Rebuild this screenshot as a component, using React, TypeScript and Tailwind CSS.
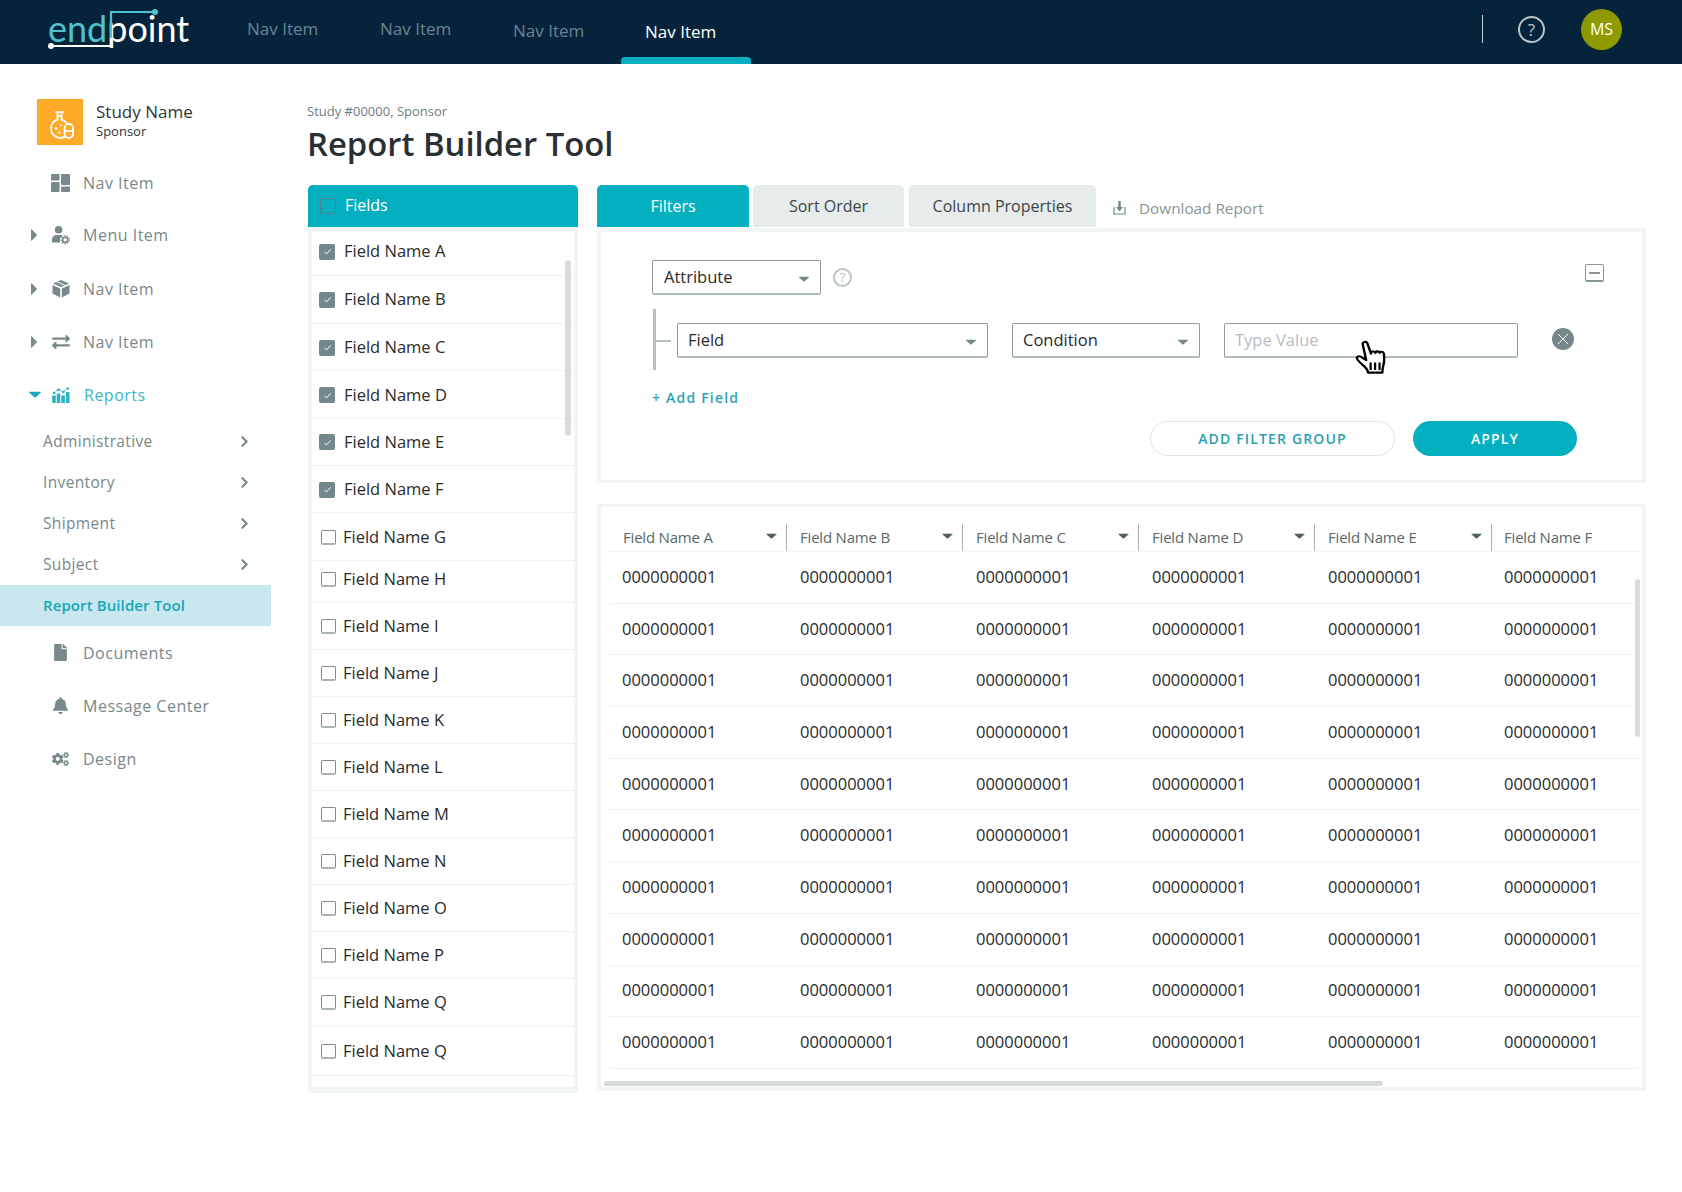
import React from 'react';
import { ChevronRight } from 'lucide-react';
import { FaExchangeAlt, FaFile, FaBell, FaCogs } from 'react-icons/fa';

const fieldRows = [
  { name: 'Field Name A', checked: true, row: 'h-[44px] pb-[4px]' },
  { name: 'Field Name B', checked: true, row: 'h-[48px]' },
  { name: 'Field Name C', checked: true, row: 'h-[47px] pt-[1px]' },
  { name: 'Field Name D', checked: true, row: 'h-[48px] pt-[1px]' },
  { name: 'Field Name E', checked: true, row: 'h-[47px]' },
  { name: 'Field Name F', checked: true, row: 'h-[47px] pt-[1px]' },
  { name: 'Field Name G', checked: false, row: 'h-[48px] pt-[1px]' },
  { name: 'Field Name H', checked: false, row: 'h-[42px] pb-[4px]' },
  { name: 'Field Name I', checked: false, row: 'h-[47px]' },
  { name: 'Field Name J', checked: false, row: 'h-[47px]' },
  { name: 'Field Name K', checked: false, row: 'h-[47px]' },
  { name: 'Field Name L', checked: false, row: 'h-[47px]' },
  { name: 'Field Name M', checked: false, row: 'h-[47px]' },
  { name: 'Field Name N', checked: false, row: 'h-[47px]' },
  { name: 'Field Name O', checked: false, row: 'h-[47px]' },
  { name: 'Field Name P', checked: false, row: 'h-[47px]' },
  { name: 'Field Name Q', checked: false, row: 'h-[48px]' },
  { name: 'Field Name Q', checked: false, row: 'h-[49px]' },
];

const columns = ['Field Name A', 'Field Name B', 'Field Name C', 'Field Name D', 'Field Name E', 'Field Name F'];
const rows = Array.from({ length: 10 }, (_, i) => i);

const Caret = ({ className }: { className: string }) => (
  <svg viewBox="0 0 12 7" className={className}>
    <path d="M0.6 0.8h10.8a.5.5 0 0 1 .35.85L6.4 6.4a.6.6 0 0 1-.8 0L.25 1.65A.5.5 0 0 1 .6.8z" fill="currentColor" />
  </svg>
);

const DashboardIcon = () => (
  <svg viewBox="0 0 19 18" className="w-[19px] h-[18px] text-[#78888b]" fill="currentColor">
    <rect x="0" y="0" width="8.5" height="6.5" rx="0.8" />
    <rect x="0" y="8" width="8.5" height="10" rx="0.8" />
    <rect x="10" y="0" width="9" height="11" rx="0.8" />
    <rect x="10" y="12.5" width="9" height="5.5" rx="0.8" />
  </svg>
);

const UserCogIcon = () => (
  <svg viewBox="0 0 20 20" className="w-[20px] h-[20px] text-[#78888b]" fill="currentColor">
    <circle cx="8" cy="4.5" r="4" />
    <path d="M1 18v-3.200C1 12 3.200 10 6 10h3.600c1 0 1.900.3 2.600.7A6 6 0 0 0 9.800 18z" />
    <circle cx="15" cy="15" r="2.700" fill="none" stroke="currentColor" strokeWidth="1.700" />
    <circle cx="15" cy="15" r="4.300" fill="none" stroke="currentColor" strokeWidth="1.400" strokeDasharray="1.500 1.500" />
  </svg>
);

const CubeIcon = () => (
  <svg viewBox="0 0 18 18" className="w-[18px] h-[18px] text-[#78888b]" fill="currentColor">
    <path d="M9 0L1 3.500 9 7l8-3.500z" />
    <path d="M.5 5v8.500L8.200 17.500V8.500z" />
    <path d="M17.500 5v8.500L9.800 17.500V8.500z" />
    <path d="M5 1.800l8 3.500" stroke="#fff" strokeWidth="1" fill="none" />
  </svg>
);

const ReportsIcon = () => (
  <svg viewBox="0 0 18 16" className="w-[18px] h-[16px] text-[#2fb4c4]" fill="currentColor">
    <rect x="0.2" y="8.500" width="3.600" height="7.500" />
    <rect x="4.700" y="6.500" width="3.600" height="9.500" />
    <rect x="9.300" y="8.500" width="3.600" height="7.500" />
    <rect x="13.900" y="5" width="3.600" height="11" />
    <path d="M2 6l4.600-3.400 4.600 2.400L15.800 1.500" fill="none" stroke="currentColor" strokeWidth="1.100" strokeDasharray="2 1" />
    <circle cx="2" cy="6" r="1.300" />
    <circle cx="6.600" cy="2.600" r="1.300" />
    <circle cx="11.200" cy="5" r="1.300" />
    <circle cx="15.800" cy="1.500" r="1.300" />
  </svg>
);

const FlaskIcon = () => (
  <svg viewBox="0 0 24 28" className="w-[24px] h-[28px]" fill="none" stroke="#fff" strokeWidth="1.8">
    <path d="M6 1.200h7M7.500 1.200v7.400M11.500 1.200v7.400" strokeLinecap="round" />
    <path d="M6.800 5h5.400" />
    <path d="M7.500 8.600C3.600 10 1 13.200 1 17.400 1 22.800 5 27 10 27c2 0 3.400-.4 4.800-1.200M11.500 8.600c2.400.8 4.400 2.400 5.600 4.400" strokeLinecap="round" />
    <rect x="14.600" y="12.800" width="8.400" height="14.200" rx="4.200" fill="#ffa928" />
    <path d="M14.800 20h8" />
    <circle cx="6.200" cy="17.600" r="1.500" fill="#fff" stroke="none" />
    <circle cx="10.800" cy="14.400" r="1.100" fill="#fff" stroke="none" />
    <circle cx="9.400" cy="21.600" r="1.200" fill="#fff" stroke="none" />
  </svg>
);

const HandCursor = () => (
  <svg viewBox="1 0 25 32" preserveAspectRatio="none" className="w-[31px] h-[35px]">
    <path
      d="M7.200 3.600c-.3-1.900 3-2.700 3.700-.7l3 9.600c-.2-2.200 3-2.700 3.600-.6.100-1.900 3-2 3.400-.1.300-1.400 3-1.500 3.300.5.500 3.600.4 8-.4 11.300-.4 1.800-.7 4-.7 6.200H11.600c-.3-2.600-1.500-4-3.400-6-1.700-1.800-4.300-4.200-5.400-6.300-1-1.900 1.300-3.400 2.900-2.200l4.300 3.100C9.500 14.500 7.800 8.300 7.200 3.600z"
      fill="#fff"
      stroke="#000"
      strokeWidth="1.900"
      strokeLinejoin="round"
    />
    <path d="M13.600 20.500v7M17.200 20.500v7M20.800 20.500v7" stroke="#000" strokeWidth="1.800" />
  </svg>
);

const Logo = () => (
  <div className="relative w-[142px] h-[42px] mt-[8px] ml-[48px]">
    <span className="absolute left-0 top-[-1px] font-['Lato',sans-serif] font-normal text-[36px] leading-[42px] tracking-[0px] whitespace-nowrap">
      <span className="text-[#4fc2d0]">end</span>
      <span className="text-white">point</span>
    </span>
    <svg viewBox="0 0 142 42" className="absolute inset-0 w-[142px] h-[42px]" fill="none" strokeWidth="2.200">
      <path d="M63 30V4h44" stroke="#4fc2d0" />
      <circle cx="107" cy="4" r="3" fill="#4fc2d0" />
      <path d="M3 38h60v-8" stroke="#fff" />
      <circle cx="3" cy="38" r="3" fill="#fff" />
    </svg>
  </div>
);

const NavLink = ({ label, icon, arrow, className = 'text-[#78888b]', textClass = 'ml-[13px]', rowClass = '' }: {
  label: string;
  icon: React.ReactNode;
  arrow?: React.ReactNode;
  className?: string;
  textClass?: string;
  rowClass?: string;
}) => (
  <div className={`flex items-center h-[53px] text-[16px] tracking-[0.5px] ${className} ${rowClass}`}>
    <div className="w-[51px] pl-[31px] flex items-center">{arrow}</div>
    <div className="w-[19px] flex justify-center">{icon}</div>
    <span className={textClass}>{label}</span>
  </div>
);

const SubLink = ({ label }: { label: string }) => (
  <div className="flex items-center justify-between h-[41px] pl-[43px] pr-[18px] w-[271px] text-[15.5px] tracking-[0.35px] text-[#78888b]">
    <span>{label}</span>
    <ChevronRight className="w-[17px] h-[17px]" strokeWidth={3} />
  </div>
);

const ArrowRight = () => (
  <svg viewBox="0 0 6 12" className="w-[6px] h-[12px] text-[#78888b]" fill="currentColor">
    <path d="M0 .8v10.400a.5.5 0 0 0 .85.35L5.700 6.500a.7.7 0 0 0 0-1L.85.45A.5.5 0 0 0 0 .8z" />
  </svg>
);

const Select = ({ label, className, caret }: { label: string; className: string; caret: string }) => (
  <div className={`relative flex items-center h-[35px] rounded-[2px] border border-[#8c9ca0] border-b-[2px] border-b-[#b0bbbd] bg-white text-[16.5px] text-[#2a2a2a] ${className}`}>
    {label}
    <Caret className={`absolute top-[15px] w-[12px] h-[6px] text-[#77888b] ${caret}`} />
  </div>
);

export default function App() {
  return (
    <div className="w-[1682px] min-h-[1192px] bg-white overflow-hidden font-['Open_Sans',sans-serif]">
      <header className="flex h-[64px] bg-[#05243c]">
        <Logo />
        <nav className="relative flex ml-[57px] text-[17px] text-[#6c8291]">
          <span className="w-[133px] pt-[16px]">Nav Item</span>
          <span className="w-[133px] pt-[16px]">Nav Item</span>
          <span className="w-[132px] pt-[18px]">Nav Item</span>
          <span className="w-[130px] pt-[19px] pl-[24px] ml-[-24px] text-white relative">
            Nav Item
            <span className="absolute left-0 bottom-0 w-[130px] h-[7px] rounded-t-[4px] bg-[#04afc0]" />
          </span>
        </nav>
        <div className="ml-auto flex items-center mr-[60px] mt-[-6px]">
          <div className="w-px h-[28px] bg-[#c5cfd3]" />
          <div className="ml-[35px] w-[27px] h-[27px] rounded-full border-2 border-[#b9c6c9] flex items-center justify-center text-[17px] leading-none text-[#b9c6c9]">
            ?
          </div>
          <div className="ml-[36px] w-[41px] h-[41px] rounded-full bg-[#8f9a00] flex items-center justify-center text-[16px] text-white">
            MS
          </div>
        </div>
      </header>

      <div className="flex">
        <aside className="w-[271px] shrink-0">
          <div className="flex pt-[35px] pl-[37px] h-[92px]">
            <div className="w-[46px] h-[46px] bg-[#ffa928] flex items-center justify-center pt-[6px] pl-[3px]">
              <FlaskIcon />
            </div>
            <div className="ml-[13px]">
              <div className="text-[17px] leading-[20px] mt-[3px] text-[#2f3436]">Study Name</div>
              <div className="text-[13px] leading-[17px] mt-[1px] font-medium text-[#2f3436]">Sponsor</div>
            </div>
          </div>
          <NavLink label="Nav Item" icon={<DashboardIcon />} />
          <NavLink label="Menu Item" icon={<UserCogIcon />} arrow={<ArrowRight />} rowClass="pb-[1px]" />
          <NavLink label="Nav Item" icon={<CubeIcon />} arrow={<ArrowRight />} />
          <NavLink label="Nav Item" icon={<FaExchangeAlt className="w-[18px] h-[18px] text-[#78888b]" />} arrow={<ArrowRight />} />
          <NavLink
            label="Reports"
            icon={<ReportsIcon />}
            className="text-[#3cb6c6]"
            textClass="ml-[14px]"
            arrow={<Caret className="w-[12px] h-[7px] ml-[-2px] text-[#18a9bb]" />}
          />
          <SubLink label="Administrative" />
          <SubLink label="Inventory" />
          <SubLink label="Shipment" />
          <SubLink label="Subject" />
          <div className="flex items-center h-[41px] pl-[43px] bg-[#c8e7ee] text-[15px] tracking-[0.1px] font-semibold text-[#18a7b9]">
            Report Builder Tool
          </div>
          <NavLink label="Documents" icon={<FaFile className="w-[13px] h-[17px] text-[#78888b]" />} />
          <NavLink label="Message Center" icon={<FaBell className="w-[15px] h-[17px] text-[#78888b]" />} />
          <NavLink label="Design" icon={<FaCogs className="w-[17px] h-[14px] text-[#78888b]" />} />
        </aside>

        <main className="ml-[37px] w-[1338px]">
          <div className="pt-[38px] ml-[-1px] text-[13px] leading-[18px] text-[#6f7c7f]">Study #00000, Sponsor</div>
          <h1 className="mt-[2px] ml-[-1px] text-[32.8px] leading-[44px] font-semibold text-[#2b2f33]">Report Builder Tool</h1>
          <div className="flex mt-[19px] gap-[19px]">
            <section className="w-[270px] shrink-0">
              <div className="flex items-center h-[42px] rounded-t-[5px] bg-[#04afc0] pl-[12px] pb-[2px] text-[16px] font-medium text-white">
                <span className="w-[16px] h-[16px] rounded-[2px] border border-[#50808c] mr-[9px] mt-[2px]" />
                Fields
              </div>
              <div className="relative border-x-[4px] border-t-[5px] border-b-[6px] border-[#f2f5f5] h-[866px] bg-white">
                {fieldRows.map((f, i) => (
                  <div key={i} className={`flex items-center border-b-[1.5px] border-[#eef2f2] text-[16.5px] text-[#2a2a2a] ${f.row}`}>
                    {f.checked ? (
                      <span className="ml-[7px] mr-[9px] w-[16px] h-[16px] rounded-[2px] bg-[#74878a] flex items-center justify-center">
                        <svg viewBox="0 0 10 10" className="w-[9px] h-[9px]" fill="none" stroke="#fff" strokeWidth="1.100">
                          <path d="M1.500 5.500l2.300 2.200 4.700-5" />
                        </svg>
                      </span>
                    ) : (
                      <span className="ml-[9px] mr-[7px] w-[15px] h-[15px] rounded-[2px] border border-[#7f8c8e] border-b-[#a9b3b5] border-b-2" />
                    )}
                    {f.name}
                  </div>
                ))}
                <div className="absolute right-[3px] top-[28px] w-[6px] h-[176px] rounded-[3px] bg-[#d8dcdc]" />
              </div>
            </section>

            <section className="w-[1049px]">
              <div className="flex items-stretch h-[42px] text-[16px]">
                <div className="w-[152px] rounded-t-[5px] bg-[#04afc0] text-white font-medium flex items-center justify-center">Filters</div>
                <div className="ml-[4px] w-[151px] rounded-t-[5px] bg-[#e6ecec] text-[#3d4547] font-medium flex items-center justify-center">Sort Order</div>
                <div className="ml-[5px] w-[187px] rounded-t-[5px] bg-[#e6ecec] text-[#3d4547] font-medium flex items-center justify-center">Column Properties</div>
                <div className="ml-[17px] flex items-center text-[15.3px] text-[#8a9496] pt-[4px]">
                  <svg viewBox="0 0 13 14" className="w-[13px] h-[14px] mr-[13px] text-[#74878a]">
                    <path d="M1 6v7h11V6" fill="none" stroke="currentColor" strokeWidth="1.200" />
                    <path d="M5.300 0h2.400v6h2.300L6.500 10.500 3 6h2.300z" fill="currentColor" />
                  </svg>
                  Download Report
                </div>
              </div>

              <div className="mt-px h-[255px] border-x-[4px] border-t-[4px] border-b-[3px] border-[#f2f5f5] bg-white">
                <div className="flex items-start pt-[28px]">
                  <Select label="Attribute" className="ml-[51px] w-[169px] pl-[11px]" caret="right-[10px]" />
                  <div className="ml-[12px] mt-[8px] w-[19px] h-[19px] rounded-full border-2 border-[#bcc5c6] flex items-center justify-center text-[13px] leading-none text-[#bcc5c6]">
                    ?
                  </div>
                  <div className="ml-auto mr-[38px] mt-[4px] w-[19px] h-[18px] rounded-[2px] border border-[#8b9799] border-b-2 flex items-center justify-center">
                    <div className="w-[11px] h-[2px] bg-[#8b9799]" />
                  </div>
                </div>
                <div className="relative flex items-center h-[61px] mt-[14px]">
                  <div className="ml-[52px] w-[2.5px] self-stretch bg-[#b5bfc1]" />
                  <div className="w-[15.5px] h-[2px] bg-[#b5bfc1] mt-[2px]" />
                  <Select label="Field" className="ml-[6px] w-[311px] pl-[10px] mt-[2px]" caret="right-[10px]" />
                  <Select label="Condition" className="ml-[24px] w-[188px] pl-[10px] mt-[2px]" caret="right-[10px]" />
                  <div className="ml-[24px] w-[294px] h-[35px] mt-[2px] flex items-center pl-[10px] rounded-[2px] border border-[#8c9ca0] border-b-[2px] border-b-[#b0bbbd] text-[16.5px] text-[#b5bdbf]">
                    Type Value
                  </div>
                  <div className="ml-[34px] mb-[1px] w-[22px] h-[22px] rounded-full bg-[#75878a] flex items-center justify-center">
                    <svg viewBox="0 0 12 12" className="w-[12px] h-[12px]" stroke="#fff" strokeWidth="1">
                      <path d="M1 1l10 10M11 1L1 11" />
                    </svg>
                  </div>
                  <div className="absolute left-[754px] top-[31px]">
                    <HandCursor />
                  </div>
                </div>
                <div className="ml-[51px] mt-[18px] text-[14px] leading-[20px] font-semibold tracking-[1.2px] text-[#2ba3b3]">+ Add Field</div>
                <div className="flex justify-end mt-[13px] pr-[65px] gap-[18px] text-[14px] font-semibold tracking-[1.15px]">
                  <div className="w-[245px] h-[35px] pb-[1px] rounded-full border border-[#e0e5e5] text-[#2a9fae] flex items-center justify-center">ADD FILTER GROUP</div>
                  <div className="w-[164px] h-[35px] pb-[1px] rounded-full bg-[#04afc0] text-white flex items-center justify-center">APPLY</div>
                </div>
              </div>

              <div className="relative mt-[21px] h-[587px] border-x-[4px] border-t-[3px] border-b-[4px] border-[#f2f5f5] bg-white overflow-hidden">
                <div className="ml-[9px] w-[1028px] pt-[17px]">
                  <div className="grid grid-cols-[177px_176px_176px_176px_177px_146px] h-[28px] border-b-[1.5px] border-[#eef2f2] mb-0">
                    {columns.map((c, i) => (
                      <div
                        key={c}
                        className={`relative flex items-center text-[15px] tracking-[-0.2px] text-[#5a6769] ${i === 5 ? 'pl-[12px]' : 'pl-[13px]'} ${i < 5 ? 'border-r border-[#a9b3b5]' : ''}`}
                      >
                        {c}
                        {i < 5 && <Caret className="absolute right-[9px] top-[9px] w-[11px] h-[6px] text-[#4f5f62]" />}
                      </div>
                    ))}
                  </div>
                  {rows.map(r => (
                    <div key={r} className="grid grid-cols-[177px_176px_176px_176px_177px_146px] h-[51.7px] border-b-[1.5px] border-[#eef2f2] text-[16.5px] text-[#2a2a2a]">
                      {columns.map((c, i) => (
                        <div key={c} className={`flex items-center ${i === 0 || i === 5 ? 'pl-[12px]' : 'pl-[13px]'}`}>
                          0000000001
                        </div>
                      ))}
                    </div>
                  ))}
                </div>
                <div className="absolute right-[2px] top-[72px] w-[5px] h-[158px] rounded-[3px] bg-[#d8dcdc]" />
                <div className="absolute left-[3px] bottom-[1px] w-[779px] h-[5px] rounded-[3px] bg-[#d6d9d9]" />
              </div>
            </section>
          </div>
        </main>
      </div>
    </div>
  );
}
